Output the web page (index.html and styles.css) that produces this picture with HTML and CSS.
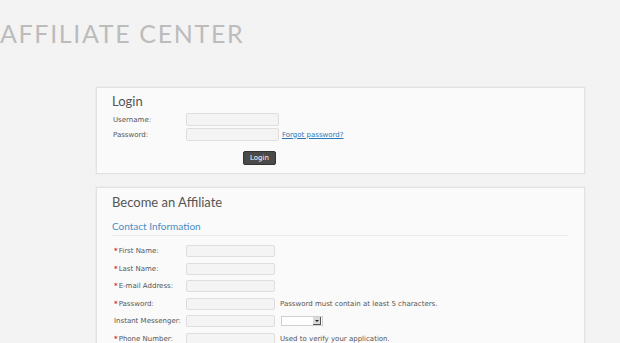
FILE: index.html
```html
<!DOCTYPE html>
<html>
<head>
    <title>Affiliate Center</title>
    <link rel="stylesheet" href="styles.css">
</head>
<body>
    <h1 class="site-title">AFFILIATE CENTER</h1>

    <div class="wrap">
        <div class="box login-box">
            <h2 class="box-title">Login</h2>
            <form class="login-form">
                <label class="lbl" for="username">Username:</label>
                <input class="field" type="text" id="username">
                <span></span>
                <label class="lbl" for="password">Password:</label>
                <input class="field" type="password" id="password">
                <a class="forgot" href="#">Forgot password?</a>
                <span></span>
                <div class="btn-cell"><button class="btn" type="button">Login</button></div>
            </form>
        </div>

        <div class="box signup-box">
            <h2 class="box-title">Become an Affiliate</h2>
            <h3 class="section-title">Contact Information</h3>
            <form class="signup-form">
                <label class="lbl" for="first"><span class="req">*</span>First Name:</label>
                <input class="field" type="text" id="first">
                <span></span>

                <label class="lbl" for="last"><span class="req">*</span>Last Name:</label>
                <input class="field" type="text" id="last">
                <span></span>

                <label class="lbl" for="email"><span class="req">*</span>E-mail Address:</label>
                <input class="field" type="text" id="email">
                <span></span>

                <label class="lbl" for="pass"><span class="req">*</span>Password:</label>
                <input class="field" type="password" id="pass">
                <span class="hint">Password must contain at least 5 characters.</span>

                <label class="lbl" for="im">Instant Messenger:</label>
                <input class="field" type="text" id="im">
                <div class="fake-select"><span class="arrow"></span></div>

                <label class="lbl" for="phone"><span class="req">*</span>Phone Number:</label>
                <input class="field" type="text" id="phone">
                <span class="hint">Used to verify your application.</span>
            </form>
        </div>
    </div>
</body>
</html>
```

FILE: styles.css
```css
body {
    margin: 0;
    background-color: #f3f3f3;
    font-family: "DejaVu Sans", Verdana, sans-serif;
    color: #555;
}

.site-title {
    margin: 18px 0 0 0;
    font-family: Lato, "Liberation Sans", sans-serif;
    font-weight: normal;
    font-size: 25px;
    line-height: 30px;
    letter-spacing: 1.65px;
    color: #bcbcbc;
}

.wrap {
    margin: 39px 0 0 96px;
    width: 489px;
}

.box {
    background-color: #fafafa;
    border: 1px solid #e2e2e2;
    box-shadow: 0 0 0 1px #ededed;
    padding: 5px 15px 8px 15px;
}

.signup-box {
    margin-top: 13px;
    padding-top: 6px;
    padding-bottom: 20px;
}

.box-title {
    margin: 0;
    font-family: Lato, "Liberation Sans", sans-serif;
    font-weight: normal;
    font-size: 13px;
    color: #555;
}

.section-title {
    margin: 10px 0 0 0;
    padding-bottom: 3px;
    border-bottom: 1px solid #ebebeb;
    font-family: Lato, "Liberation Sans", sans-serif;
    font-weight: normal;
    font-size: 10px;
    line-height: 12px;
    color: #4a8cc4;
    width: 456px;
}

.lbl {
    font-size: 7px;
    color: #555;
    white-space: nowrap;
}

.req {
    color: #d42c2c;
    font-weight: bold;
    margin-right: 1px;
}

.field {
    box-sizing: border-box;
    margin: 0;
    padding: 0;
    border: 1px solid #dedede;
    border-radius: 2px;
    background-color: #f4f4f4;
}

.login-form {
    margin-top: 4px;
    display: grid;
    grid-template-columns: 70px 93px auto;
    grid-template-rows: 13px 13px auto;
    row-gap: 2px;
    column-gap: 3px;
    align-items: center;
    margin-left: 1px;
}

.login-form .field {
    height: 13px;
    width: 93px;
}

.forgot {
    font-size: 7px;
    color: #2a78b8;
}

.btn-cell {
    grid-column: 2 / span 2;
    margin-top: 8px;
    padding-left: 57px;
}

.btn {
    display: block;
    height: 14px;
    padding: 0 6px;
    border: 1px solid #333;
    border-radius: 2px;
    background-color: #4a4a4a;
    color: #fff;
    font-family: "DejaVu Sans", sans-serif;
    font-size: 7px;
    line-height: 12px;
}

.signup-form {
    margin-top: 9px;
    display: grid;
    grid-template-columns: 67px 89px auto;
    grid-auto-rows: 12px;
    row-gap: 5.5px;
    column-gap: 5px;
    align-items: center;
    margin-left: 2px;
}

.signup-form .field {
    height: 12px;
    width: 89px;
}

.hint {
    font-size: 7px;
    color: #555;
    white-space: nowrap;
}

.fake-select {
    box-sizing: border-box;
    width: 42px;
    height: 10px;
    margin-left: 1px;
    border: 1px solid #cfcfcf;
    background-color: #fff;
    position: relative;
}

.arrow {
    position: absolute;
    right: 1px;
    top: 0;
    width: 7px;
    height: 7px;
    background-color: #d8d8d8;
    border-right: 1px solid #555;
    border-bottom: 1px solid #555;
}

.arrow::after {
    content: "";
    position: absolute;
    left: 2px;
    top: 3px;
    border-left: 2px solid transparent;
    border-right: 2px solid transparent;
    border-top: 2px solid #222;
}
```
